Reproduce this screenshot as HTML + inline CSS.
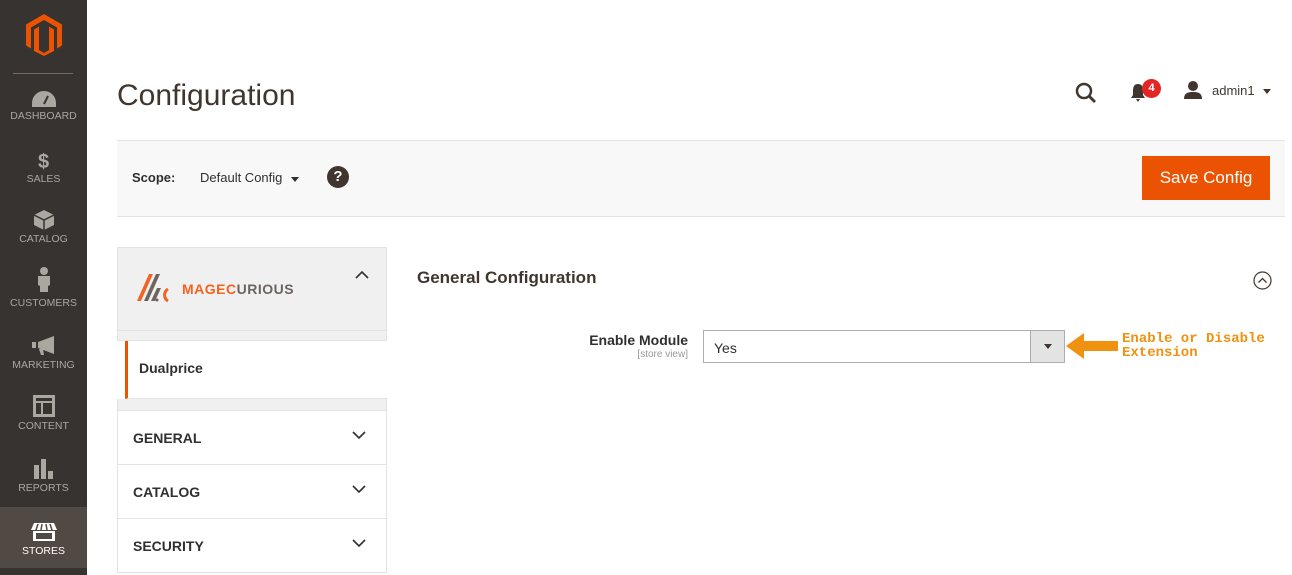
<!DOCTYPE html>
<html><head><meta charset="utf-8"><style>
*{box-sizing:border-box;margin:0;padding:0}
body{width:1292px;height:575px;overflow:hidden;background:#fff;font-family:"Liberation Sans",sans-serif;color:#303030;position:relative}
.side{position:absolute;left:0;top:0;width:87px;height:575px;background:#373330}
.nav{position:absolute;left:0;width:87px;text-align:center;color:#aaa6a0;font-size:10.5px}
.nav svg{display:block;margin:0 auto 3px}
.abs{position:absolute}
.tab{position:absolute;left:117px;width:270px;height:54px;border:1px solid #e3e3e3;border-top:none;font-weight:bold;font-size:14px;padding:19px 15px;color:#303030}
.chev{position:absolute;right:20px;top:20px}
</style></head><body>
<div class="side">
  <svg class="abs" style="left:26px;top:14px" width="36" height="42" viewBox="0 0 36 42"><path d="M18 0L36 10.5V31.5L31 34.5V13.5L18 6 5 13.5V34.5L0 31.5V10.5Z M8 15.5L13 12.5V36L18 39 23 36V12.5L28 15.5V37L18 42 8 37Z" fill="#eb5202"/></svg>
  <div class="abs" style="left:13px;top:73px;width:60px;height:1px;background:#736963"></div>
  <div class="nav" style="top:91px"><svg width="24" height="16" viewBox="0 0 24 16"><path d="M12 0A12 12 0 0 0 0 12v4h24v-4A12 12 0 0 0 12 0z" fill="#aaa6a0"/><path d="M12 13l4-8" stroke="#373330" stroke-width="2"/></svg>DASHBOARD</div>
  <div class="nav" style="top:151px"><div style="font-size:20px;font-weight:bold;color:#aaa6a0;line-height:22px">$</div>SALES</div>
  <div class="nav" style="top:210px"><svg width="20" height="20" viewBox="0 0 20 20"><path d="M10 0L20 5V15L10 20 0 15V5Z" fill="#aaa6a0"/><path d="M0 5L10 10 20 5M10 10V20" stroke="#373330" stroke-width="1.5" fill="none"/></svg>CATALOG</div>
  <div class="nav" style="top:266px"><svg width="14" height="28" viewBox="0 0 14 26"><circle cx="7" cy="4" r="4" fill="#aaa6a0"/><path d="M1 9h12v9l-2 1v6H3v-6l-2-1z" fill="#aaa6a0"/></svg>CUSTOMERS</div>
  <div class="nav" style="top:336px"><svg width="24" height="20" viewBox="0 0 24 20"><path d="M0 6h4v6H0zM6 6l16-6v18L6 12zM7 13l4 0 1 6H9z" fill="#aaa6a0"/></svg>MARKETING</div>
  <div class="nav" style="top:395px"><svg width="22" height="22" viewBox="0 0 22 22"><path d="M0 0h22v22H0zM3 3v3h16V3zM3 8v11h5V8zM10 8v11h9V8z" fill="#aaa6a0" fill-rule="evenodd"/></svg>CONTENT</div>
  <div class="nav" style="top:459px"><svg width="20" height="20" viewBox="0 0 20 20"><path d="M0 6h5v14H0zM7 0h5v20H7zM14 12h5v8h-5z" fill="#aaa6a0"/></svg>REPORTS</div>
  <div class="abs" style="left:0;top:507px;width:87px;height:61px;background:#514943"></div>
  <div class="nav" style="top:522px;color:#fff"><svg width="26" height="20" viewBox="0 0 26 18"><path d="M3 0h20l3 7H0z" fill="#fff"/><path d="M7 1l-2 6M11 1l-1 6M15 1l1 6M19 1l2 6" stroke="#514943" stroke-width="1.5"/><path d="M2 8h22v10H2z" fill="#fff"/><path d="M5 10h16v6H5z" fill="#514943"/></svg>STORES</div>
</div>

<div class="abs" style="left:117px;top:79px;font-size:30px;color:#41362f">Configuration</div>
<svg class="abs" style="left:1075px;top:82px" width="22" height="22" viewBox="0 0 22 22"><circle cx="9" cy="9" r="7" stroke="#41362f" stroke-width="2.5" fill="none"/><path d="M14 14l6 6" stroke="#41362f" stroke-width="2.8"/></svg>
<svg class="abs" style="left:1130px;top:84px" width="16" height="18" viewBox="0 0 16 18"><path d="M8 0c4 0 5 3 5 7v4l2 3H1l2-3V7c0-4 1-7 5-7zM6 15h4l-2 3z" fill="#41362f"/></svg>
<div class="abs" style="left:1142px;top:79px;width:19px;height:19px;border-radius:50%;background:#e22626;color:#fff;font-size:11px;font-weight:bold;text-align:center;line-height:19px">4</div>
<svg class="abs" style="left:1184px;top:81px" width="18" height="18" viewBox="0 0 18 18"><circle cx="9" cy="5" r="5" fill="#41362f"/><path d="M0 18c0-6 4-7 9-7s9 1 9 7z" fill="#41362f"/></svg>
<div class="abs" style="left:1212px;top:83px;font-size:13px;color:#41362f">admin1</div>
<div class="abs" style="left:1263px;top:89px;border:4px solid transparent;border-top:5px solid #41362f"></div>

<div class="abs" style="left:117px;top:140px;width:1168px;height:77px;background:#f8f8f8;border-top:1px solid #e3e3e3;border-bottom:1px solid #e3e3e3"></div>
<div class="abs" style="left:132px;top:170px;font-size:13px;font-weight:bold">Scope:</div>
<div class="abs" style="left:200px;top:170px;font-size:13px">Default Config</div>
<div class="abs" style="left:291px;top:177px;border:4px solid transparent;border-top:5px solid #303030"></div>
<div class="abs" style="left:327px;top:166px;width:22px;height:22px;border-radius:50%;background:#41362f;color:#fff;font-weight:bold;font-size:15px;text-align:center;line-height:22px">?</div>
<div class="abs" style="left:1142px;top:156px;width:128px;height:44px;background:#eb5202;color:#fff;font-size:17px;text-align:center;line-height:44px">Save Config</div>

<div class="abs" style="left:117px;top:247px;width:270px;height:84px;background:#f0f0f0;border:1px solid #e3e3e3"></div>
<svg class="abs" style="left:137px;top:273px" width="38" height="30" viewBox="0 0 38 30"><path d="M0 28L12 1h4L4 28z" fill="#f26322"/><path d="M7 28L19 1h4L11 28z" fill="#6d6461"/><path d="M14 28L20 15h4l-6 13z" fill="#6d6461"/><circle cx="20" cy="27" r="1.5" fill="#6d6461"/><path d="M31 16a7 7 0 0 0 0 12" stroke="#f26322" stroke-width="3" fill="none"/></svg>
<div class="abs" style="left:182px;top:281px;font-size:14px;font-weight:bold;letter-spacing:0.5px;color:#6d6461"><span style="color:#f26322">MAGEC</span>URIOUS</div>
<svg class="abs" style="left:355px;top:270px" width="14" height="9" viewBox="0 0 14 9"><path d="M1 8l6-6 6 6" stroke="#303030" stroke-width="1.6" fill="none"/></svg>
<div class="abs" style="left:117px;top:331px;width:270px;height:10px;background:#f0f0f0;border:1px solid #e3e3e3;border-top:none"></div>
<div class="abs" style="left:125px;top:341px;width:262px;height:58px;background:#fff;border-left:3px solid #eb5202;border-bottom:1px solid #e3e3e3;padding:19px 11px;font-size:14px;font-weight:bold;color:#303030">Dualprice</div>
<div class="abs" style="left:117px;top:399px;width:270px;height:12px;background:#f0f0f0;border:1px solid #e3e3e3;border-top:none"></div>
<div class="tab" style="top:411px">GENERAL<svg class="chev" width="14" height="9" viewBox="0 0 14 9"><path d="M1 1l6 6 6-6" stroke="#303030" stroke-width="1.6" fill="none"/></svg></div>
<div class="tab" style="top:465px">CATALOG<svg class="chev" width="14" height="9" viewBox="0 0 14 9"><path d="M1 1l6 6 6-6" stroke="#303030" stroke-width="1.6" fill="none"/></svg></div>
<div class="tab" style="top:519px">SECURITY<svg class="chev" width="14" height="9" viewBox="0 0 14 9"><path d="M1 1l6 6 6-6" stroke="#303030" stroke-width="1.6" fill="none"/></svg></div>

<div class="abs" style="left:417px;top:268px;font-size:17px;font-weight:bold;color:#41362f">General Configuration</div>
<svg class="abs" style="left:1253px;top:271px" width="19" height="19" viewBox="0 0 19 19"><circle cx="9.5" cy="9.5" r="8.5" stroke="#41362f" stroke-width="1.2" fill="none"/><path d="M5.5 11.5l4-4 4 4" stroke="#41362f" stroke-width="1.3" fill="none"/></svg>

<div class="abs" style="left:560px;top:332px;width:128px;text-align:right;font-size:14px;font-weight:bold;color:#303030">Enable Module</div>
<div class="abs" style="left:560px;top:349px;width:128px;text-align:right;font-size:10px;color:#999">[store view]</div>
<div class="abs" style="left:703px;top:330px;width:362px;height:33px;border:1px solid #adadad;font-size:14px;padding:9px 10px">Yes</div>
<div class="abs" style="left:1030px;top:331px;width:34px;height:31px;background:#e3e3e3;border-left:1px solid #adadad"></div>
<div class="abs" style="left:1044px;top:344px;border:4px solid transparent;border-top:5px solid #41362f"></div>
<svg class="abs" style="left:1066px;top:332px" width="54" height="28" viewBox="0 0 54 28"><path d="M0 14L18 1v8h34v10H18v8z" fill="#f0910f"/></svg>
<div class="abs" style="left:1122px;top:332px;font-family:'Liberation Mono',monospace;font-size:14px;font-weight:bold;color:#f0910f;line-height:14px">Enable or Disable<br>Extension</div>
</body></html>
